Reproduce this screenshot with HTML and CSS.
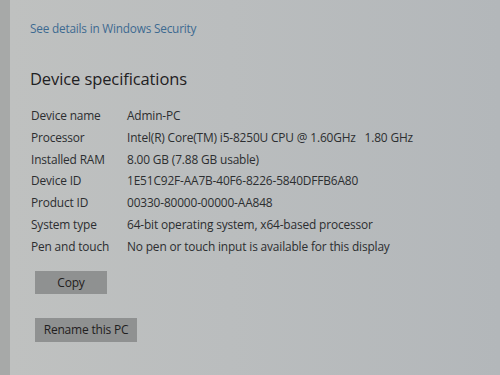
FILE: index.html
```html
<!DOCTYPE html>
<html>
<head>
<meta charset="utf-8">
<link rel="stylesheet" href="styles.css">
</head>
<body>
<div class="screen">
  <div class="content">
    <a class="link">See details in Windows Security</a>
    <h2 class="heading">Device specifications</h2>
    <div class="specs">
      <div class="label">Device name</div><div class="value">Admin-PC</div>
      <div class="label">Processor</div><div class="value">Intel(R) Core(TM) i5-8250U CPU @ 1.60GHz&nbsp;&nbsp;&nbsp;1.80 GHz</div>
      <div class="label">Installed RAM</div><div class="value">8.00 GB (7.88 GB usable)</div>
      <div class="label">Device ID</div><div class="value">1E51C92F-AA7B-40F6-8226-5840DFFB6A80</div>
      <div class="label">Product ID</div><div class="value">00330-80000-00000-AA848</div>
      <div class="label">System type</div><div class="value">64-bit operating system, x64-based processor</div>
      <div class="label">Pen and touch</div><div class="value">No pen or touch input is available for this display</div>
    </div>
    <div class="buttons">
      <button class="btn btn-copy">Copy</button>
      <button class="btn btn-rename">Rename this PC</button>
    </div>
  </div>
</div>
</body>
</html>
```

FILE: styles.css
```css
html, body {
  margin: 0;
  padding: 0;
}
body {
  width: 500px;
  height: 375px;
  overflow: hidden;
  font-family: "Open Sans", "Noto Sans", sans-serif;
  color: #2a2c2e;
}
.screen {
  width: 500px;
  height: 375px;
  display: flex;
  background: linear-gradient(90deg, #bfc1c0 0%, #babdbe 45%, #b3b7ba 100%);
  border-left: 10px solid #a7a9a8;
  box-sizing: border-box;
}
.content {
  padding: 20px 0 0 20px;
  display: flex;
  flex-direction: column;
}
.link {
  font-size: 11.8px;
  color: #3d6a91;
  line-height: 16px;
  letter-spacing: -0.2px;
}
.heading {
  margin: 32px 0 0 0;
  font-weight: 400;
  font-size: 16.5px;
  line-height: 22px;
  color: #1f2123;
  letter-spacing: -0.1px;
}
.specs {
  margin-top: 15px;
  display: grid;
  grid-template-columns: 97px auto;
  grid-auto-rows: 21.8px;
  font-size: 11.9px;
  line-height: 21.8px;
  letter-spacing: -0.15px;
  color: #2c2e30;
}
.label {
  padding-left: 1px;
}
.buttons {
  margin-top: 13px;
  display: flex;
  flex-direction: column;
  align-items: flex-start;
  gap: 24px;
  padding-left: 5px;
}
.btn {
  border: none;
  background: #8f9191;
  color: #1f2020;
  font-family: "Open Sans", "Noto Sans", sans-serif;
  font-size: 12px;
  height: 23px;
  padding: 0;
  letter-spacing: -0.2px;
}
.btn-copy {
  width: 72px;
}
.btn-rename {
  width: 102px;
  height: 24px;
}
```
